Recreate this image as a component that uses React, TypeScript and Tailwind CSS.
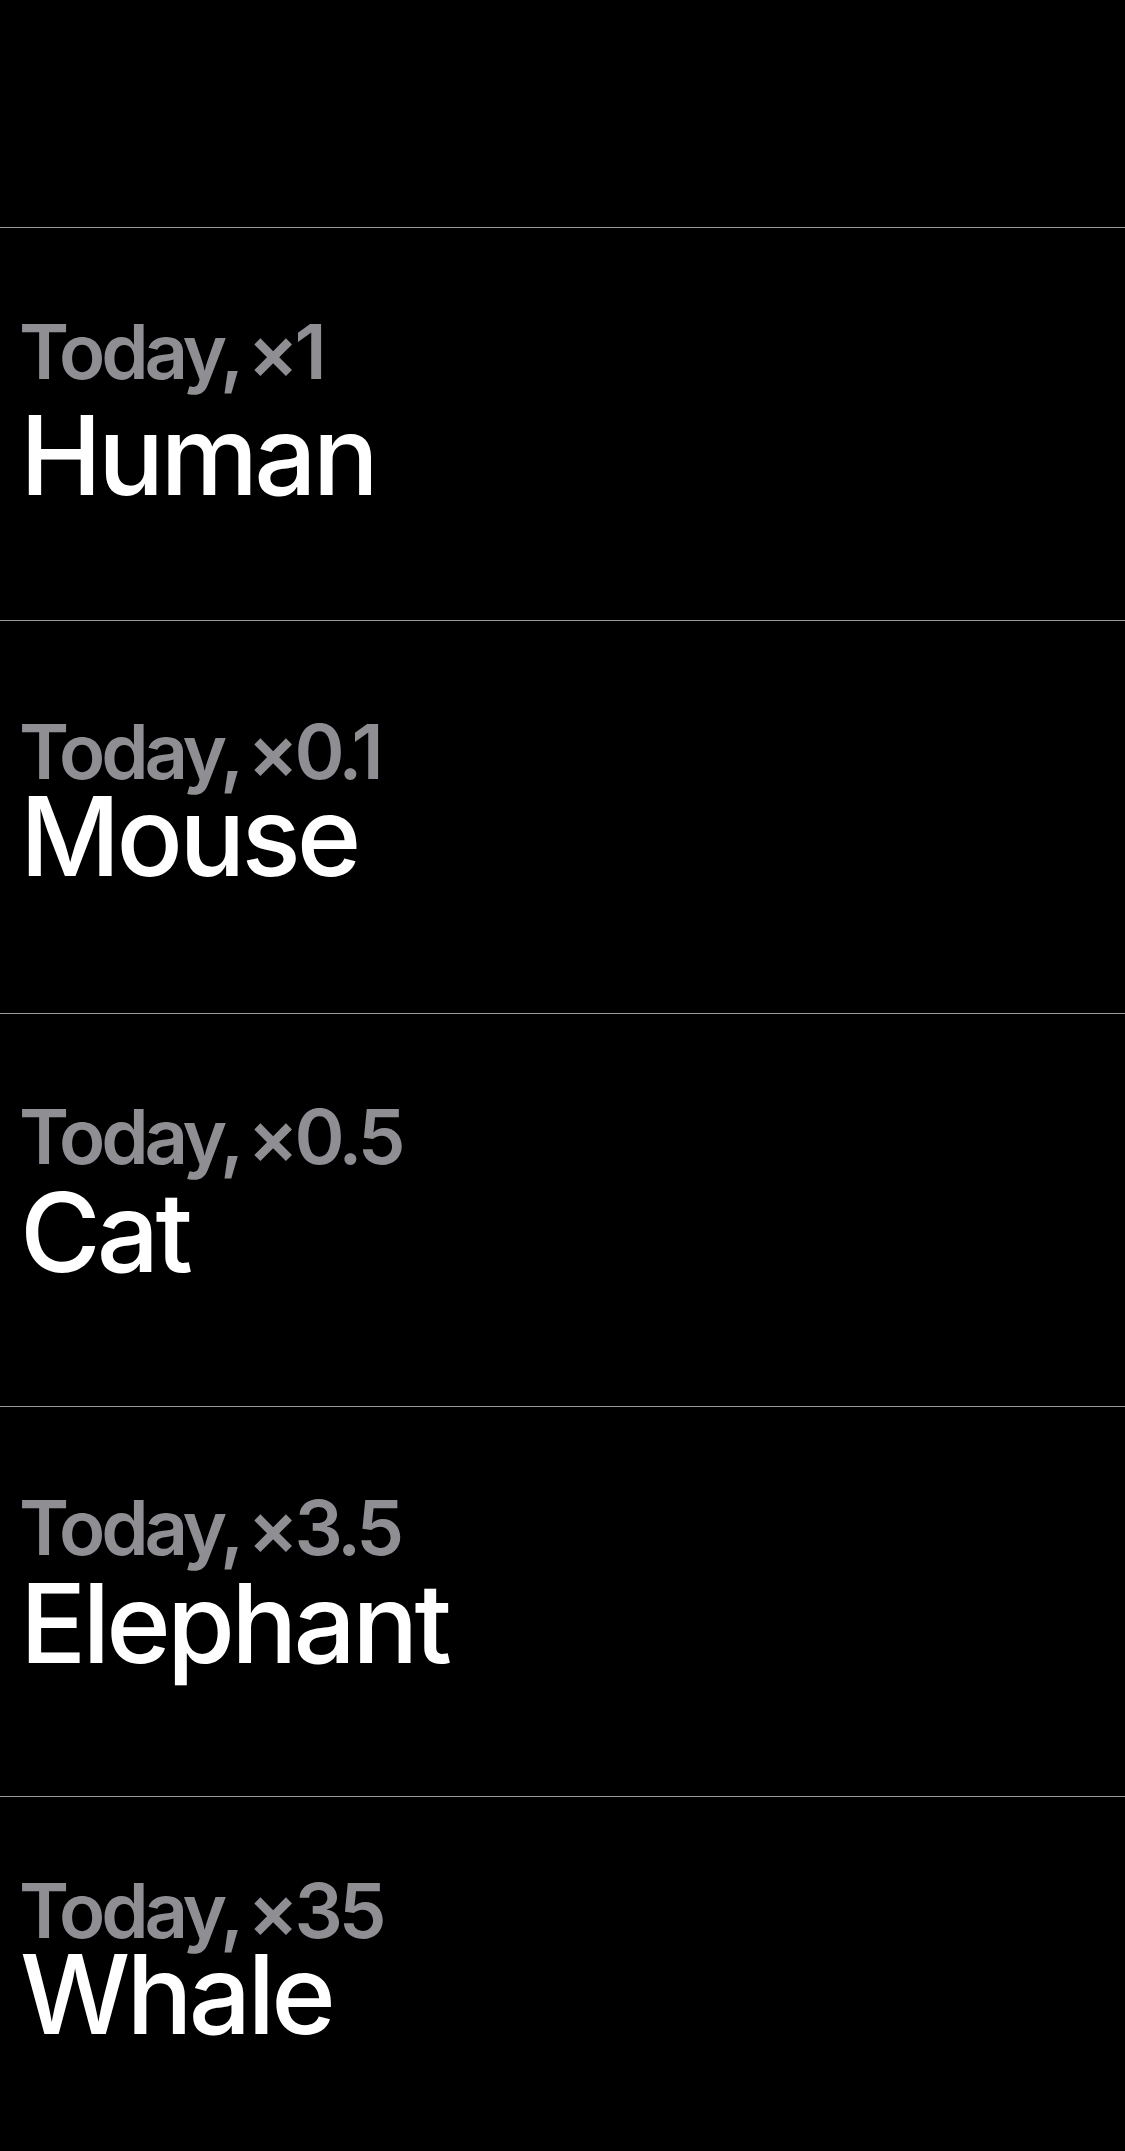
const rows = [
  { scale: "×1", name: "Human", pt: "pt-[85px]", gap: "mt-[11px]", h: "h-[393px]" },
  { scale: "×0.1", name: "Mouse", pt: "pt-[92px]", gap: "-mt-[8px]", h: "h-[393px]" },
  { scale: "×0.5", name: "Cat", pt: "pt-[84px]", gap: "mt-[3px]", h: "h-[393px]" },
  { scale: "×3.5", name: "Elephant", pt: "pt-[82px]", gap: "mt-[3px]", h: "h-[390px]" },
  { scale: "×35", name: "Whale", pt: "pt-[75px]", gap: "-mt-[9px]", h: "" },
];

export default function App() {
  return (
    <div className="w-[1125px] h-[2151px] bg-black overflow-hidden font-['Inter',sans-serif]">
      <div className="h-[228px] border-b border-[#9a9a9a]" />
      {rows.map((r, i) => (
        <div
          key={r.name}
          className={`${r.h} ${r.pt} pl-[19px] ${i < rows.length - 1 ? "border-b border-[#9a9a9a]" : ""}`}
        >
          <p className="text-[76px] leading-none font-semibold text-[#8e8e93] tracking-[-0.055em] [word-spacing:-6px]">
            Today, {r.scale}
          </p>
          <p className={`${r.gap} ml-[1px] text-[110px] leading-none font-medium text-white tracking-[-0.035em]`}>
            {r.name}
          </p>
        </div>
      ))}
    </div>
  );
}
